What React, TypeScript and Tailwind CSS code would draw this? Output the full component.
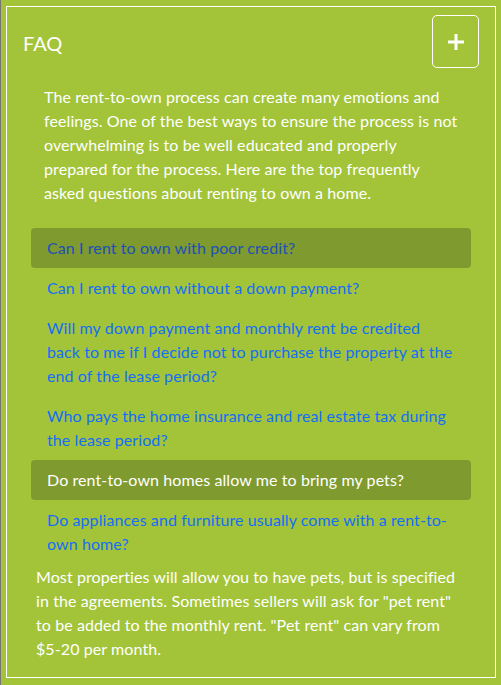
import React from "react";

const questions = [
  { q: "Can I rent to own with poor credit?", state: "hover" },
  { q: "Can I rent to own without a down payment?", state: "link" },
  {
    q: "Will my down payment and monthly rent be credited back to me if I decide not to purchase the property at the end of the lease period?",
    state: "link",
  },
  { q: "Who pays the home insurance and real estate tax during the lease period?", state: "link" },
  { q: "Do rent-to-own homes allow me to bring my pets?", state: "active" },
  { q: "Do appliances and furniture usually come with a rent-to-own home?", state: "link" },
];

export default function App() {
  return (
    <div
      className="w-[501px] min-h-[685px] bg-[#a3c439] border-l border-[#7a7470] pl-[5px] pr-[5px] pt-[6px] pb-[7px] tracking-[0.09px]"
      style={{ fontFamily: "Lato, 'Noto Sans', sans-serif" }}
    >
      <div className="border border-white h-[672px] w-[490px]">
        <div className="flex items-center justify-between pl-4 pr-4 pt-2">
          <h2 className="text-[20px] leading-[28px] text-white mt-[2px] tracking-normal">FAQ</h2>
          <button className="w-[47px] h-[53px] border border-white rounded-[5px] flex items-center justify-center">
            <svg width="16" height="16" viewBox="0 0 16 16">
              <path d="M8 0V16M0 8H16" stroke="white" strokeWidth="3" />
            </svg>
          </button>
        </div>
        <p className="mt-[17px] ml-[37px] w-[416px] text-[16px] leading-6 text-white">
          The rent-to-own process can create many emotions and feelings. One of the best ways to ensure the process is not overwhelming is to be well educated and properly prepared for the process. Here are the top frequently asked questions about renting to own a home.
        </p>
        <ul className="mt-[23px] ml-[24px] w-[440px] flex flex-col">
          {questions.map((item) => (
            <li
              key={item.q}
              className={
                item.state === "hover"
                  ? "px-4 py-2 text-[16px] leading-6 rounded-[4px] bg-[#7f9a2f] text-[#1d4fb8]"
                  : item.state === "active"
                  ? "px-4 py-2 text-[16px] leading-6 rounded-[4px] bg-[#7f9a2f] text-white"
                  : "px-4 py-2 text-[16px] leading-6 rounded-[4px] text-[#136ef6]"
              }
            >
              {item.q}
            </li>
          ))}
        </ul>
        <p className="mt-[1px] ml-[29px] w-[420px] text-[16px] leading-6 text-white">
          Most properties will allow you to have pets, but is specified in the agreements. Sometimes sellers will ask for "pet rent" to be added to the monthly rent. "Pet rent" can vary from $5-20 per month.
        </p>
      </div>
    </div>
  );
}
